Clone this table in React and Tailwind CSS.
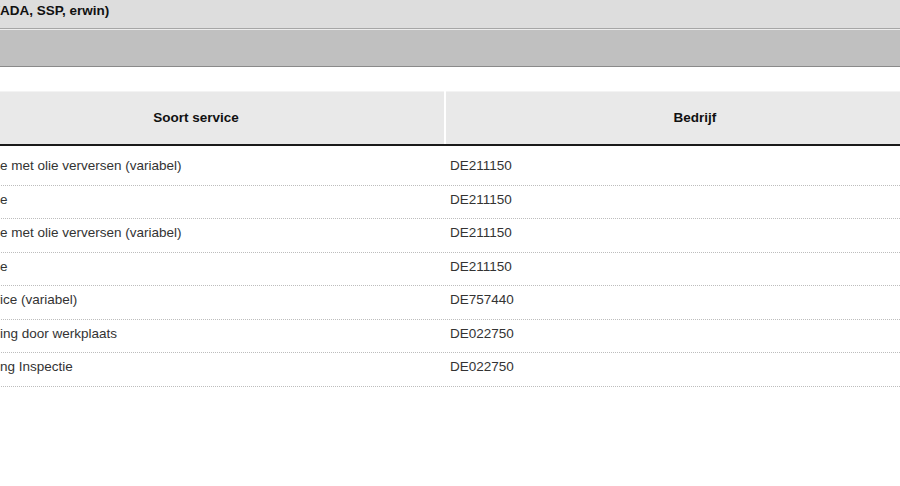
import React from "react";

const rows = [
  ["Inspecti", "e met olie verversen (variabel)", "DE211150"],
  ["Inspecti", "e", "DE211150"],
  ["Inspecti", "e met olie verversen (variabel)", "DE211150"],
  ["Inspecti", "e", "DE211150"],
  ["Olieserv", "ice (variabel)", "DE757440"],
  ["Herstell", "ing door werkplaats", "DE022750"],
  ["Opvolgi", "ng Inspectie", "DE022750"],
];

export default function App() {
  return (
    <div
      className="w-[900px] h-[486px] overflow-hidden bg-white text-[13.5px]"
      style={{ fontFamily: '"Liberation Sans", Arial, sans-serif' }}
    >
      <div className="h-[29px] bg-[#dddddd] border-b border-[#a6a6a6] flex items-start pt-[3px] font-bold text-[#111] leading-[15px] whitespace-nowrap">
        <span className="flex w-0 justify-end">Servicehistorie (</span>
        <span>ADA, SSP, erwin)</span>
      </div>
      <div className="h-[38px] bg-[#c0c0c0] border-t border-[#ececec] border-b border-b-[#8a8a8a]" />
      <div className="h-[24px]" />
      <div className="ml-[-52px] w-[996px]">
        <div className="flex h-[55px] border-b-2 border-[#1a1a1a] font-bold text-[#111]">
          <div className="w-[496px] bg-[#e9e9e9] border-t border-[#f3f3f3] flex items-center justify-center">
            Soort service
          </div>
          <div className="w-[2px] bg-white" />
          <div className="flex-1 bg-[#e9e9e9] border-t border-[#f3f3f3] flex items-center justify-center">
            Bedrijf
          </div>
        </div>
        <div className="pt-[6px] text-[#333]">
          {rows.map((r, i) => (
            <div
              key={i}
              className="flex h-[33.5px] border-b border-dotted border-[#bdbdbd] leading-[15px] pt-[6px] whitespace-nowrap"
            >
              <div className="w-[498px] pl-[52px] flex">
                <span className="flex w-0 justify-end">{r[0]}</span>
                <span>{r[1]}</span>
              </div>
              <div className="flex-1 pl-[4px]">{r[2]}</div>
            </div>
          ))}
        </div>
      </div>
    </div>
  );
}
